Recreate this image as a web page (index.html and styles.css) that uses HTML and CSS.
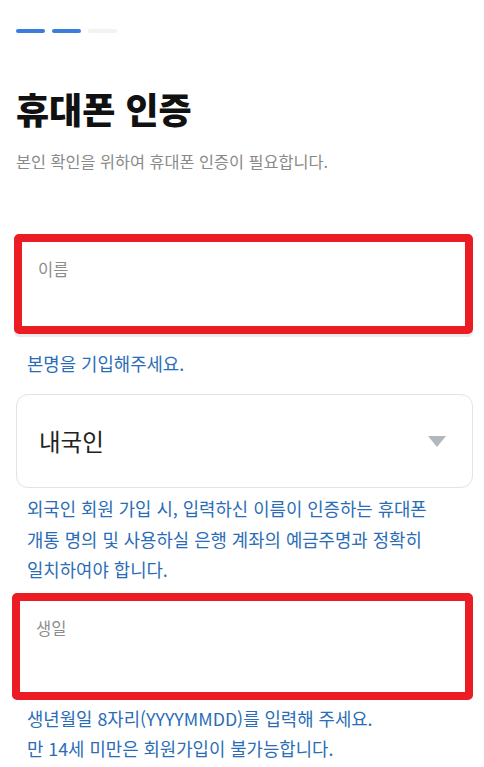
FILE: index.html
```html
<!DOCTYPE html>
<html lang="ko">

<head>
    <meta charset="UTF-8">
    <meta name="viewport" content="width=device-width, initial-scale=1.0">
    <title>휴대폰 인증</title>
    <link rel="stylesheet" href="styles.css">
</head>

<body>
    <div class="page">
        <div class="steps">
            <div class="step on"></div>
            <div class="step on"></div>
            <div class="step"></div>
        </div>

        <h1 class="title">휴대폰 인증</h1>
        <p class="sub">본인 확인을 위하여 휴대폰 인증이 필요합니다.</p>

        <div class="field mark name">
            <div class="label">이름</div>
        </div>
        <p class="help first">본명을 기입해주세요.</p>

        <div class="select">
            <span class="value">내국인</span>
            <span class="arrow"></span>
        </div>
        <p class="help tall">외국인 회원 가입 시, 입력하신 이름이 인증하는 휴대폰<br>개통 명의 및 사용하실 은행 계좌의 예금주명과 정확히<br>일치하여야 합니다.</p>

        <div class="field mark birth">
            <div class="label">생일</div>
        </div>
        <p class="help tall last">생년월일 8자리(YYYYMMDD)를 입력해 주세요.<br>만 14세 미만은 회원가입이 불가능합니다.</p>
    </div>
</body>

</html>
```

FILE: styles.css
```css
body {
    margin: 0;
    background: #fff;
    font-family: "Noto Sans CJK KR", "Noto Sans", sans-serif;
}

.page {
    padding: 29px 11px 0 16px;
}

.steps {
    display: flex;
    gap: 7px;
}

.step {
    width: 29px;
    height: 4px;
    border-radius: 2px;
    background-color: #f2f2f2;
}

.step.on {
    background-color: #3b7ddd;
}

.title {
    margin: 52px 0 0;
    font-size: 36px;
    line-height: 46px;
    font-weight: 900;
    color: #111;
}

.sub {
    margin: 19px 0 0;
    font-size: 16.3px;
    line-height: 22px;
    color: #8a8a8a;
}

.field {
    margin-top: 62px;
    height: 84px;
    border: 8px solid #ec1c24;
    border-radius: 5px;
    margin-left: -2px;
    box-shadow: 0 3px 0 #ececec;
}

.field.birth {
    margin-top: 8px;
    height: 91px;
    margin-left: -4px;
    box-shadow: none;
}

.label {
    padding: 16px 0 0 16px;
    font-size: 16.5px;
    line-height: 22px;
    color: #8d8d8d;
}

.help {
    margin: 0;
    padding-left: 11px;
    font-size: 17.8px;
    line-height: 24px;
    color: #2a6db6;
}

.help.first {
    margin-top: 17px;
}

.help.tall {
    margin-top: 5px;
    line-height: 30.5px;
}

.help.last {
    margin-top: 3px;
    line-height: 30px;
}

.select {
    margin-top: 19px;
    height: 92px;
    border: 1px solid #e3e3e3;
    border-radius: 12px;
    display: flex;
    align-items: center;
    justify-content: space-between;
    padding: 0 26px 0 22px;
}

.value {
    font-size: 23.5px;
    color: #222;
}

.arrow {
    width: 0;
    height: 0;
    border-left: 9px solid transparent;
    border-right: 9px solid transparent;
    border-top: 11px solid #b3b7be;
}
```
